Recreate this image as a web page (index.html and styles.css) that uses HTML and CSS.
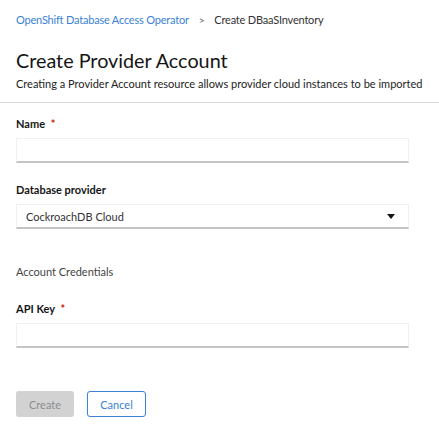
FILE: index.html
```html
<!DOCTYPE html>
<html>
<head>
<meta charset="utf-8">
<link rel="stylesheet" href="styles.css">
</head>
<body>
<div class="header">
  <nav class="breadcrumb">
    <a class="crumb-link">OpenShift Database Access Operator</a>
    <span class="crumb-sep">&gt;</span>
    <span class="crumb-current">Create DBaaSInventory</span>
  </nav>
  <h1 class="title">Create Provider Account</h1>
  <p class="subtitle">Creating a Provider Account resource allows provider cloud instances to be imported</p>
</div>
<form class="form">
  <div class="group">
    <label class="label">Name <span class="req">*</span></label>
    <div class="input"></div>
  </div>
  <div class="group">
    <label class="label">Database provider</label>
    <div class="input select">
      <span>CockroachDB Cloud</span>
      <svg class="caret" width="8" height="5" viewBox="0 0 8 5"><path d="M0 0h8L4 5z" fill="#151515"/></svg>
    </div>
  </div>
  <div class="section">Account Credentials</div>
  <div class="group">
    <label class="label">API Key <span class="req">*</span></label>
    <div class="input"></div>
  </div>
  <div class="actions">
    <button type="button" class="btn btn-disabled">Create</button>
    <button type="button" class="btn btn-secondary">Cancel</button>
  </div>
</form>
</body>
</html>
```

FILE: styles.css
```css
* { box-sizing: border-box; }
html, body { margin: 0; padding: 0; background: #fff; }
body {
  font-family: Lato, "Liberation Sans", sans-serif;
  color: #151515;
  width: 439px;
}
.header {
  padding: 12px 16px 10px;
  border-bottom: 1px solid #d8d8d8;
}
.breadcrumb {
  display: flex;
  align-items: center;
  font-size: 11px;
  font-weight: 400;
  letter-spacing: -0.2px;
  line-height: 16px;
}
.crumb-link { color: #3a82d6; }
.crumb-sep { color: #555; font-size: 10px; margin: 0 10px 0 10px; }
.crumb-current { color: #333; }
.title {
  margin: 20px 0 0;
  font-size: 19.8px;
  font-weight: 400;
  line-height: 24px;
}
.subtitle {
  margin: 4px 0 0;
  font-size: 11px;
  line-height: 16px;
  color: #222;
  white-space: nowrap;
}
.form {
  padding: 14px 16px 0;
  width: 425px;
}
.group { margin-bottom: 20px; }
.label {
  display: block;
  font-size: 11px;
  font-weight: 700;
  line-height: 14px;
  margin-bottom: 7px;
}
.req { color: #c9190b; margin-left: 3px; }
.input {
  height: 25px;
  width: 393px;
  border: 1px solid #f0f0f0;
  border-bottom: 2px solid #c4c4c4;
  background: #fff;
}
.select {
  display: flex;
  align-items: center;
  justify-content: space-between;
  padding: 0 13px 0 9px;
  font-size: 11px;
  color: #333;
}
.caret { display: block; }
.section {
  font-size: 11px;
  line-height: 14px;
  color: #444;
  margin-top: 36px;
  margin-bottom: 23px;
}
.actions {
  display: flex;
  gap: 13px;
  margin-top: 43px;
}
.btn {
  font-family: inherit;
  font-size: 11px;
  height: 26px;
  border-radius: 3px;
  padding: 0;
  background: #fff;
}
.btn-disabled {
  width: 58px;
  background: #d2d2d2;
  color: #8a8d90;
  border: none;
}
.btn-secondary {
  width: 59px;
  color: #3a82d6;
  border: 1px solid #3a82d6;
}
```
